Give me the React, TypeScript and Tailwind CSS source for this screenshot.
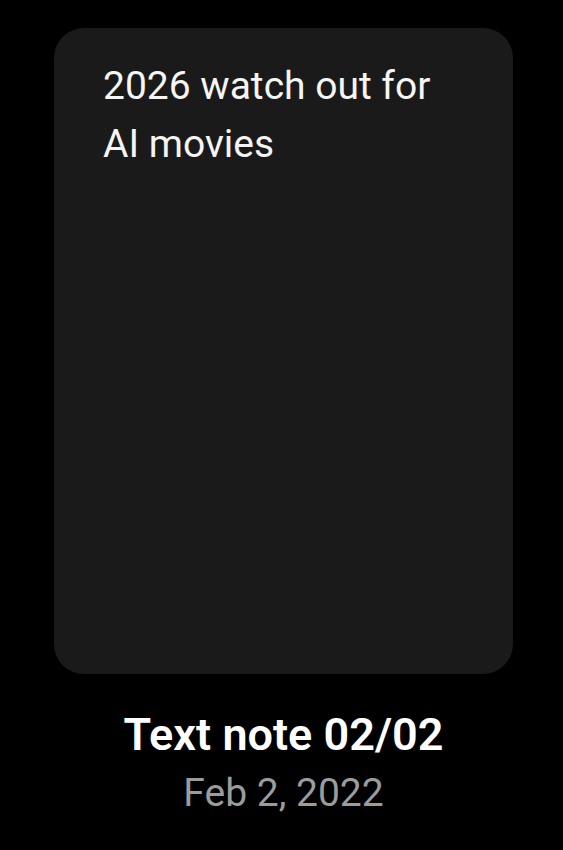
export default function App() {
  return (
    <div className="flex h-[850px] w-full flex-col items-center bg-black pl-[4px] pt-[28px] font-['Roboto',sans-serif]">
      <div className="h-[646px] w-[459px] rounded-[30px] bg-[#1a1a1a] pl-[49px] pr-[40px] pt-[29px]">
        <p className="text-[39px] leading-[58px] text-[#f5f5f5]">
          2026 watch out for
          <br />
          AI movies
        </p>
      </div>
      <h1 className="mt-[35px] text-[45px] font-semibold leading-[52px] text-white">
        Text note 02/02
      </h1>
      <p className="mt-[8px] text-[39px] leading-[48px] text-[#9c9c9c]">
        Feb 2, 2022
      </p>
    </div>
  );
}
